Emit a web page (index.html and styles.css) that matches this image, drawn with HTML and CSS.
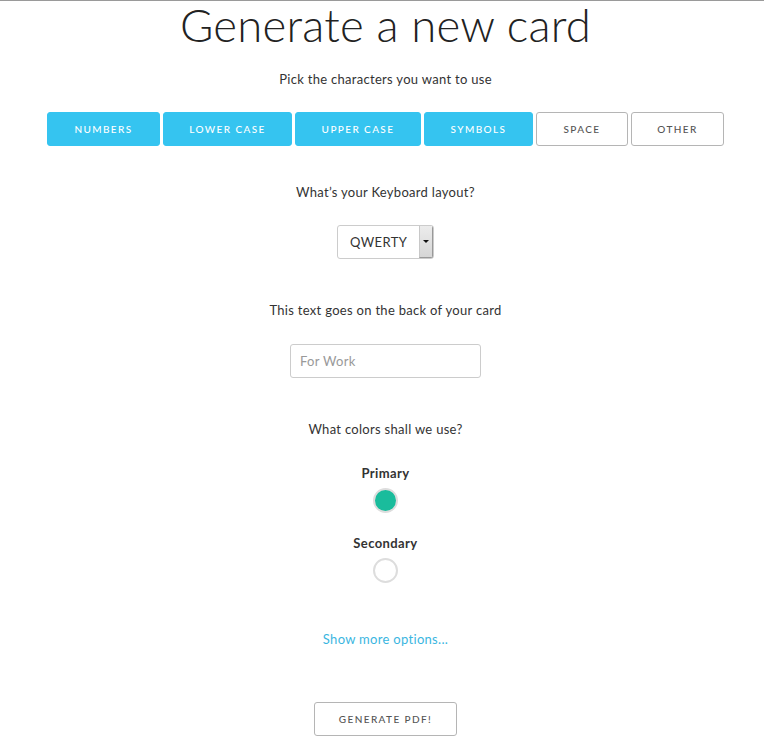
FILE: index.html
```html
<!DOCTYPE html>
<html>
<head>
<meta charset="utf-8">
<link rel="stylesheet" href="styles.css">
</head>
<body>
<div class="page">
  <h1 class="title">Generate a new card</h1>
  <p class="label first">Pick the characters you want to use</p>
  <div class="chars">
    <button class="btn on w-num">NUMBERS</button>
    <button class="btn on w-low">LOWER CASE</button>
    <button class="btn on w-up">UPPER CASE</button>
    <button class="btn on w-sym">SYMBOLS</button>
    <button class="btn off w-space">SPACE</button>
    <button class="btn off w-other">OTHER</button>
  </div>
  <p class="label">What’s your Keyboard layout?</p>
  <div class="select">
    <span class="select-text">QWERTY</span>
    <span class="select-arrow"><span class="tri"></span></span>
  </div>
  <p class="label">This text goes on the back of your card</p>
  <div class="input"><span class="placeholder">For Work</span></div>
  <p class="label">What colors shall we use?</p>
  <div class="color">
    <span class="color-name">Primary</span>
    <span class="swatch primary"></span>
  </div>
  <div class="color">
    <span class="color-name">Secondary</span>
    <span class="swatch secondary"></span>
  </div>
  <a class="more">Show more options...</a>
  <button class="btn off gen">GENERATE PDF!</button>
</div>
</body>
</html>
```

FILE: styles.css
```css
html, body {
  margin: 0;
  padding: 0;
  background: #fff;
  overflow: hidden;
}
body {
  border-top: 1px solid #9a9a9a;
  font-family: "Lato", "Open Sans", sans-serif;
  color: #333;
}
.page {
  width: 771px;
  display: flex;
  flex-direction: column;
  align-items: center;
}
.title {
  margin: 0;
  font-weight: 300;
  font-size: 45.5px;
  line-height: 47px;
  color: #222;
  letter-spacing: 0.2px;
}
.label {
  margin: 0;
  font-size: 13px;
  line-height: 16px;
  color: #333;
  letter-spacing: 0.3px;
}
.label.first { margin-top: 23px; }
.chars {
  display: flex;
  gap: 3px;
  margin-top: 25px;
  margin-bottom: 38px;
}
.btn {
  height: 34px;
  box-sizing: border-box;
  border-radius: 3px;
  font-family: "Lato", sans-serif;
  font-size: 10px;
  letter-spacing: 1.4px;
  font-weight: 500;
  padding: 0;
  cursor: pointer;
}
.btn.on {
  background: #35c4f0;
  border: 1px solid #35c4f0;
  color: #fff;
}
.btn.off {
  background: #fff;
  border: 1px solid #b5b5b5;
  color: #555;
}
.w-num { width: 113px; }
.w-low { width: 129px; }
.w-up { width: 126px; }
.w-sym { width: 109px; }
.w-space { width: 92px; }
.w-other { width: 93px; }
.select {
  margin-top: 25px;
  margin-bottom: 43px;
  width: 97px;
  height: 34px;
  box-sizing: border-box;
  border: 1px solid #ccc;
  border-radius: 3px;
  display: flex;
  align-items: stretch;
  overflow: hidden;
}
.select-text {
  flex: 1;
  display: flex;
  align-items: center;
  padding-left: 12px;
  font-size: 13px;
  letter-spacing: 0.4px;
  color: #333;
}
.select-arrow {
  width: 12px;
  background: linear-gradient(#ececec, #d6d6d6);
  border-left: 1px solid #c8c8c8;
  border-right: 1px solid #999;
  border-bottom: 1px solid #999;
  display: flex;
  align-items: center;
  justify-content: center;
}
.tri {
  width: 0;
  height: 0;
  border-left: 3px solid transparent;
  border-right: 3px solid transparent;
  border-top: 3px solid #111;
}
.input {
  margin-top: 26px;
  margin-bottom: 43px;
  width: 191px;
  height: 34px;
  box-sizing: border-box;
  border: 1px solid #ccc;
  border-radius: 3px;
  display: flex;
  align-items: center;
  padding-left: 9px;
}
.placeholder {
  font-size: 13px;
  color: #999;
  letter-spacing: 0.3px;
}
.color {
  display: flex;
  flex-direction: column;
  align-items: center;
  margin-top: 28px;
}
.color + .color { margin-top: 22px; }
.color-name {
  font-size: 13px;
  font-weight: 700;
  color: #333;
  line-height: 16px;
  letter-spacing: 0.4px;
}
.swatch {
  margin-top: 7px;
  width: 25px;
  height: 25px;
  box-sizing: border-box;
  border-radius: 50%;
  border: 2px solid #ddd;
}
.swatch.primary { background: #1abc9c; }
.swatch.secondary { background: #fff; }
.more {
  margin-top: 48px;
  font-size: 13px;
  color: #3bb6df;
  line-height: 16px;
  letter-spacing: 0.3px;
}
.gen {
  margin-top: 55px;
  width: 143px;
}
```
